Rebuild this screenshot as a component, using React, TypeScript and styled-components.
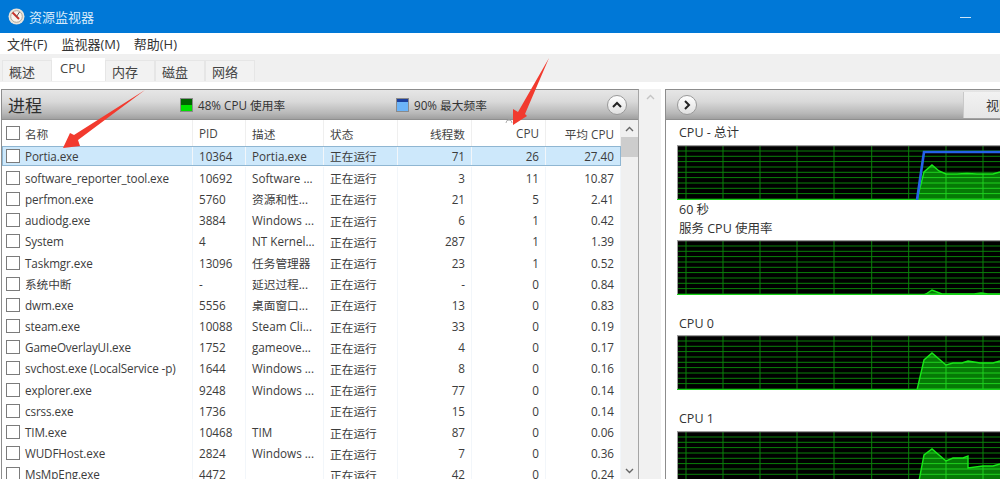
import { useId } from "react";
import styled, { createGlobalStyle } from "styled-components";

const Global = createGlobalStyle`
  html, body {
    margin: 0;
    padding: 0;
    background: #fff;
    overflow: hidden;
  }
  * {
    box-sizing: border-box;
  }
`

const FONT = `"Open Sans", "Noto Sans CJK SC", sans-serif`
const COLS = "191px 53px 78px 74px 74px 74px 75px"

const Page = styled.div`
  position: relative;
  width: 1000px;
  height: 479px;
  overflow: hidden;
  background: #fff;
  font-family: ${FONT};
  font-size: 11.7px;
  color: #3c3c3c;
`
const TitleBar = styled.div`
  height: 33px;
  background: #0078d7;
  display: flex;
  align-items: center;
  padding-left: 8px;
  gap: 4px;
  color: #d6eafa;
  font-size: 13px;
`
const MinBtn = styled.div`
  width: 11px;
  height: 1px;
  background: #cfe6f8;
  margin-left: auto;
  margin-right: 29px;
  margin-top: 1px;
`
const MenuBar = styled.div`
  height: 21px;
  background: #fff;
  display: flex;
  align-items: center;
  gap: 14px;
  padding-left: 7px;
  font-size: 13px;
  color: #333;
`
const TabStrip = styled.div`
  height: 28px;
  background: #f0f0f0;
  display: flex;
  align-items: flex-end;
  padding: 0 0 1px 2px;
`
const Tab = styled.div<{ $active?: boolean }>`
  height: ${p => (p.$active ? 23 : 21)}px;
  width: ${p => (p.$active ? 53 : 50)}px;
  background: ${p => (p.$active ? "#fff" : "#f2f2f2")};
  border: ${p => (p.$active ? "none" : "1px solid #e6e6e6")};
  border-bottom: none;
  font-size: 13px;
  color: #444;
  display: flex;
  padding-left: ${p => (p.$active ? 8 : 6)}px;
  padding-top: ${p => (p.$active ? 1 : 0)}px;
  align-items: ${p => (p.$active ? "flex-start" : "center")};
`
const Panes = styled.div`
  display: flex;
  height: 397px;
  padding-top: 7px;
`
const LeftPane = styled.div`
  width: 638px;
  margin-left: 1px;
  border: 1px solid #8d8d8d;
  border-bottom: none;
  border-right-color: #a5a5a5;
  display: flex;
  flex-direction: column;
  overflow: hidden;
`
const Splitter = styled.div`
  width: 22px;
  display: flex;
  justify-content: center;
  background: #f1f1f1;
  margin-right: 4px;
  padding-top: 5px;
`
const RightPane = styled.div`
  flex: 1;
  min-width: 0;
  border: 1px solid #8d8d8d;
  border-bottom: none;
  border-right: none;
  display: flex;
  flex-direction: column;
  overflow: hidden;
`
const SectionHead = styled.div`
  flex: none;
  height: 30px;
  display: flex;
  align-items: center;
  background: linear-gradient(#e6e6e6, #d9d9d9 40%, #b8b8b8 80%, #a0a0a0);
  border-bottom: 1px solid #8f8f8f;
`
const HeadTitle = styled.div`
  font-size: 17px;
  color: #2e2e2e;
  width: 178px;
  padding-left: 6px;
`
const Meter = styled.div<{ $width?: number }>`
  display: flex;
  align-items: center;
  gap: 5px;
  width: ${p => (p.$width ? `${p.$width}px` : "auto")};
  color: #333;
`
const MeterBox = styled.div<{ $dark: string; $light: string; $split: number }>`
  width: 13px;
  height: 14px;
  border: 1px solid #8a8a8a;
  background: linear-gradient(${p => p.$dark} ${p => p.$split}%, ${p => p.$light} ${p => p.$split}%);
`
const RoundBtn = styled.div<{ $left?: string; $right?: number }>`
  width: 20px;
  height: 20px;
  border-radius: 50%;
  border: 1px solid #9a9a9a;
  background: linear-gradient(#fff, #e0e0e0);
  display: flex;
  align-items: center;
  justify-content: center;
  flex: none;
  margin-left: ${p => p.$left ?? "0"};
  margin-right: ${p => p.$right ?? 0}px;
`
const TableWrap = styled.div`
  flex: 1;
  display: flex;
  min-height: 0;
`
const TableBody = styled.div`
  width: 619px;
  flex: none;
`
const ScrollBar = styled.div`
  flex: 1;
  background: #f0f0f0;
  display: flex;
  flex-direction: column;
  align-items: center;
  position: relative;
`
const ArrowCell = styled.div`
  height: 17px;
  display: flex;
  align-items: center;
  flex: none;
`
const Thumb = styled.div`
  width: 100%;
  height: 20px;
  background: #cdcdcd;
`
const DownArrow = styled.svg`
  position: absolute;
  bottom: 5px;
`
const HeaderRow = styled.div`
  display: grid;
  grid-template-columns: ${COLS};
  height: 26px;
`
const Row = styled.div<{ $selected?: boolean }>`
  display: grid;
  grid-template-columns: ${COLS};
  height: ${p => (p.$selected ? 19.7 : 21.2)}px;
  margin-bottom: ${p => (p.$selected ? 1.5 : 0)}px;
  background: ${p => (p.$selected ? "#cde8fb" : "transparent")};
  outline: ${p => (p.$selected ? "1px solid #8fb6d2" : "none")};
  outline-offset: -1px;
`
const Cell = styled.div<{ $right?: boolean; $head?: boolean }>`
  display: flex;
  align-items: center;
  gap: 6px;
  padding: ${p => (p.$right ? "0 6px 0 0" : "0 0 0 6px")};
  justify-content: ${p => (p.$right ? "flex-end" : "flex-start")};
  border-right: 1px solid ${p => (p.$head ? "#efefef" : "#f2f6fa")};
  white-space: nowrap;
  overflow: hidden;
  color: ${p => (p.$head ? "#444" : "#3c3c3c")};
`
const NameCell = styled(Cell)`
  padding-left: 4px;
  gap: 5px;
  letter-spacing: -0.12px;
`
const Check = styled.span`
  width: 14px;
  height: 14px;
  flex: none;
  border: 1px solid #7b7b7b;
  background: #fff;
`
const ViewBtn = styled.div`
  margin-left: auto;
  width: 37px;
  height: 26px;
  background: linear-gradient(#f2f2f2, #e6e6e6);
  border-left: 1px solid #c9c9c9;
  font-size: 13px;
  color: #333;
  padding: 3px 0 0 22px;
  overflow: hidden;
  white-space: nowrap;
`
const Graphs = styled.div`
  padding-left: 11px;
  flex: 1;
`
const GraphLabel = styled.div<{ $top: number; $bottom: number }>`
  height: 18px;
  line-height: 18px;
  margin-top: ${p => p.$top}px;
  margin-bottom: ${p => p.$bottom}px;
  color: #333;
  font-size: 12.5px;
  padding-left: 2px;
`
const GraphFrame = styled.div`
  height: 55px;
  background: #000;
  overflow: hidden;
  & > svg {
    display: block;
  }
`
const Overlay = styled.svg`
  position: absolute;
  left: 0;
  top: 0;
  pointer-events: none;
`

const vx = [9, 46, 83, 120, 157, 194.7, 231.7, 269, 306]
const hy = [6, 11.3, 16.6, 22, 27.3, 32.6, 38, 43.3, 48.6, 54]

function Grid({ color }: { color: string }) {
  return <>
    {hy.map(y => <line key={y} x1="0" x2="323" y1={y} y2={y} stroke={color} />)}
    {vx.map(x => <line key={x} x1={x} x2={x} y1="0" y2="55" stroke={color} />)}
  </>
}

function Graph({ green, blue }: { green: string; blue?: string }) {
  const id = useId()
  const start = green.split(" ")[0].split(",")[0]
  const area = `${start},55 ${green} 323,55`
  return (
    <GraphFrame>
      <svg width="323" height="55" viewBox="0 0 323 55">
        <clipPath id={id}><polygon points={area} /></clipPath>
        <Grid color="#0a800a" />
        <polygon points={area} fill="#067a06" />
        <g clipPath={`url(#${id})`}>
          <Grid color="#1fd01f" />
        </g>
        <polyline points={green} fill="none" stroke="#18e818" strokeWidth="1.4" />
        <line x1="0" x2="323" y1="0.5" y2="0.5" stroke="#9c9c9c" strokeWidth="1.5" />
        <line x1="0.5" x2="0.5" y1="0" y2="55" stroke="#9c9c9c" />
        <line x1="0" x2="323" y1="54.5" y2="54.5" stroke="#18d018" />
        {blue && <polyline points={blue} fill="none" stroke="#2462e8" strokeWidth="2.6" />}
      </svg>
    </GraphFrame>
  )
}

const rows = [
  ["software_reporter_tool.exe", "10692", "Software ...", "正在运行", "3", "11", "10.87"],
  ["perfmon.exe", "5760", "资源和性...", "正在运行", "21", "5", "2.41"],
  ["audiodg.exe", "3884", "Windows ...", "正在运行", "6", "1", "0.42"],
  ["System", "4", "NT Kernel...", "正在运行", "287", "1", "1.39"],
  ["Taskmgr.exe", "13096", "任务管理器", "正在运行", "23", "1", "0.52"],
  ["系统中断", "-", "延迟过程...", "正在运行", "-", "0", "0.84"],
  ["dwm.exe", "5556", "桌面窗口...", "正在运行", "13", "0", "0.83"],
  ["steam.exe", "10088", "Steam Cli...", "正在运行", "33", "0", "0.19"],
  ["GameOverlayUI.exe", "1752", "gameove...", "正在运行", "4", "0", "0.17"],
  ["svchost.exe (LocalService -p)", "1644", "Windows ...", "正在运行", "8", "0", "0.16"],
  ["explorer.exe", "9248", "Windows ...", "正在运行", "77", "0", "0.14"],
  ["csrss.exe", "1736", "", "正在运行", "15", "0", "0.14"],
  ["TIM.exe", "10468", "TIM", "正在运行", "87", "0", "0.06"],
  ["WUDFHost.exe", "2824", "Windows ...", "正在运行", "7", "0", "0.36"],
  ["MsMpEng.exe", "4472", "", "正在运行", "42", "0", "0.24"],
]

function ProcRow({ data, selected }: { data: string[]; selected?: boolean }) {
  return (
    <Row $selected={selected}>
      <NameCell><Check />{data[0]}</NameCell>
      <Cell>{data[1]}</Cell>
      <Cell>{data[2]}</Cell>
      <Cell>{data[3]}</Cell>
      <Cell $right>{data[4]}</Cell>
      <Cell $right>{data[5]}</Cell>
      <Cell $right>{data[6]}</Cell>
    </Row>
  )
}

export default function App() {
  return <Page>
    <Global />
    <TitleBar>
      <svg width="17" height="17" viewBox="0 0 17 17">
        <circle cx="8.5" cy="8.5" r="8" fill="#e8e4dc" />
        <circle cx="8.5" cy="8.5" r="5.8" fill="#f8f4ee" stroke="#b0a89c" />
        <path d="M4.5 4.5 L11 11" stroke="#c8322a" strokeWidth="2" />
        <path d="M8.5 8.5 L11.5 4" stroke="#555" strokeWidth="1" />
      </svg>
      <span>资源监视器</span>
      <MinBtn />
    </TitleBar>
    <MenuBar>
      <span>文件(F)</span>
      <span>监视器(M)</span>
      <span>帮助(H)</span>
    </MenuBar>
    <TabStrip>
      <Tab>概述</Tab>
      <Tab $active>CPU</Tab>
      <Tab>内存</Tab>
      <Tab>磁盘</Tab>
      <Tab>网络</Tab>
    </TabStrip>
    <Panes>
      <LeftPane>
        <SectionHead>
          <HeadTitle>进程</HeadTitle>
          <Meter $width={216}>
            <MeterBox $dark="#006400" $light="#00e000" $split={48} />
            48% CPU 使用率
          </Meter>
          <Meter>
            <MeterBox $dark="#1c3f9c" $light="#6cb4f8" $split={22} />
            90% 最大频率
          </Meter>
          <RoundBtn $left="auto" $right={11}>
            <svg width="10" height="8" viewBox="0 0 10 8"><path d="M1 6 L5 2 L9 6" fill="none" stroke="#222" strokeWidth="2" /></svg>
          </RoundBtn>
        </SectionHead>
        <TableWrap>
          <TableBody>
            <HeaderRow>
              <NameCell $head><Check />名称</NameCell>
              <Cell $head>PID</Cell>
              <Cell $head>描述</Cell>
              <Cell $head>状态</Cell>
              <Cell $head $right>线程数</Cell>
              <Cell $head $right>CPU</Cell>
              <Cell $head $right>平均 CPU</Cell>
            </HeaderRow>
            <ProcRow selected data={["Portia.exe", "10364", "Portia.exe", "正在运行", "71", "26", "27.40"]} />
            {rows.map(r => <ProcRow key={r[0]} data={r} />)}
          </TableBody>
          <ScrollBar>
            <ArrowCell>
              <svg width="9" height="6" viewBox="0 0 9 6"><path d="M1 5 L4.5 1.5 L8 5" fill="none" stroke="#666" strokeWidth="1.4" /></svg>
            </ArrowCell>
            <Thumb />
            <DownArrow width="9" height="6" viewBox="0 0 9 6"><path d="M1 1 L4.5 4.5 L8 1" fill="none" stroke="#666" strokeWidth="1.4" /></DownArrow>
          </ScrollBar>
        </TableWrap>
      </LeftPane>
      <Splitter>
        <svg width="9" height="6" viewBox="0 0 9 6"><path d="M1 5 L4.5 1.5 L8 5" fill="none" stroke="#c4c4c4" strokeWidth="1.4" /></svg>
      </Splitter>
      <RightPane>
        <SectionHead>
          <RoundBtn $left="11px">
            <svg width="8" height="10" viewBox="0 0 8 10"><path d="M2 1 L6 5 L2 9" fill="none" stroke="#222" strokeWidth="2" /></svg>
          </RoundBtn>
          <ViewBtn>视图</ViewBtn>
        </SectionHead>
        <Graphs>
          <GraphLabel $top={4} $bottom={3}>CPU - 总计</GraphLabel>
          <Graph
            green="240,55 247,27 255,20 262,26 269,29 280,29 290,28.5 300,29 316,29 323,27"
            blue="240,55 247,7 323,7"
          />
          <GraphLabel $top={1} $bottom={0}>60 秒</GraphLabel>
          <GraphLabel $top={1} $bottom={2}>服务 CPU 使用率</GraphLabel>
          <Graph green="247,55 249,54 255,50 265,54 297,54 304,53 311,54 323,54" />
          <GraphLabel $top={20} $bottom={2}>CPU 0</GraphLabel>
          <Graph green="240,55 247,25 255,18 269,30 276,28 285,28 291,26 303,28 316,28 323,26" />
          <GraphLabel $top={20} $bottom={3}>CPU 1</GraphLabel>
          <Graph green="241,55 247,24 255,18 269,30 276,27 286,27 291,25 291,37 306,35 316,35 323,33" />
        </Graphs>
      </RightPane>
    </Panes>
    <Overlay width="1000" height="479" viewBox="0 0 1000 479">
      <path d="M506 123 A3 3 0 1 1 512 123" fill="none" stroke="#b0b0b0" />
      <polygon points="145,90 78,140 80,146 63,148 70,133 74,135" fill="#f23a2e" />
      <polygon points="549,58 525,114 527,116 513,125 513,109 518,112" fill="#f23a2e" />
    </Overlay>
  </Page>
}
